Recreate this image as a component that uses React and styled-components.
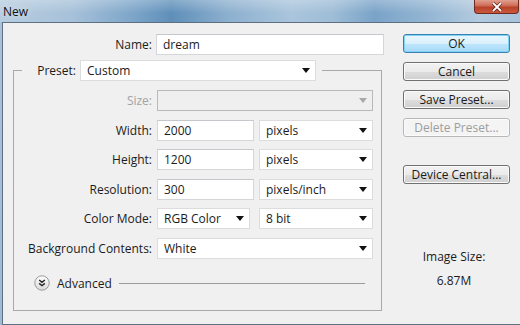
import React from 'react';
import styled, { createGlobalStyle } from 'styled-components';

const GlobalStyle = createGlobalStyle`
  html, body {
    margin: 0;
    padding: 0;
    background: #f0f0f0;
  }
  body {
    font-family: "Open Sans", "Liberation Sans", sans-serif;
    font-size: 12px;
    color: #1b1b1b;
  }
`;

function Arrow({ disabled }) {
  return (
    <svg width="8" height="5" viewBox="0 0 8 5">
      <path d="M0 0 H8 L4 5 Z" fill={disabled ? '#a8a8a8' : '#111'} />
    </svg>
  );
}

function AdvancedIcon() {
  return (
    <svg width="16" height="16" viewBox="0 0 16 16">
      <defs>
        <linearGradient id="adv" x1="0" y1="0" x2="0" y2="1">
          <stop offset="0" stopColor="#ffffff" />
          <stop offset="1" stopColor="#d9d9d9" />
        </linearGradient>
      </defs>
      <circle cx="8" cy="8" r="7.2" fill="url(#adv)" stroke="#9a9a9a" strokeWidth="1" />
      <path d="M5.2 5 L8 7.3 L10.8 5 M5.2 8.4 L8 10.7 L10.8 8.4" fill="none" stroke="#222" strokeWidth="1.4" />
    </svg>
  );
}

export default function App() {
  return (
    <>
      <GlobalStyle />
      <Window>
        <TitleBar>
          <Title>New</Title>
          <CloseButton>
            <svg width="12" height="10" viewBox="0 0 12 10">
              <path d="M2 1 L10 9 M10 1 L2 9" stroke="#5a1a10" strokeWidth="3.2" />
              <path d="M2 1 L10 9 M10 1 L2 9" stroke="#fff" strokeWidth="1.8" />
            </svg>
          </CloseButton>
        </TitleBar>

        <Client>
          <FormColumn>
            <NameRow>
              <Label>Name:</Label>
              <Field $width={228}>dream</Field>
            </NameRow>

            <Group>
              <Legend>
                <LegendLabel>Preset:</LegendLabel>
                <Dropdown $width={236}>
                  <span>Custom</span>
                  <Arrow />
                </Dropdown>
              </Legend>

              <Rows>
                <Label $disabled>Size:</Label>
                <Dropdown $disabled>
                  <span />
                  <Arrow disabled />
                </Dropdown>

                <Label>Width:</Label>
                <Pair>
                  <Field>2000</Field>
                  <Dropdown><span>pixels</span><Arrow /></Dropdown>
                </Pair>

                <Label>Height:</Label>
                <Pair>
                  <Field>1200</Field>
                  <Dropdown><span>pixels</span><Arrow /></Dropdown>
                </Pair>

                <Label>Resolution:</Label>
                <Pair>
                  <Field>300</Field>
                  <Dropdown><span>pixels/inch</span><Arrow /></Dropdown>
                </Pair>

                <Label>Color Mode:</Label>
                <Pair>
                  <Dropdown $width={93}><span>RGB Color</span><Arrow /></Dropdown>
                  <Dropdown><span>8 bit</span><Arrow /></Dropdown>
                </Pair>

                <Label>Background Contents:</Label>
                <Dropdown><span>White</span><Arrow /></Dropdown>
              </Rows>

              <AdvancedRow>
                <AdvancedIcon />
                <span>Advanced</span>
                <Rule />
              </AdvancedRow>
            </Group>
          </FormColumn>

          <ButtonColumn>
            <Button $default>OK</Button>
            <Button>Cancel</Button>
            <Button>Save Preset...</Button>
            <Button $disabled>Delete Preset...</Button>
            <Button $gap>Device Central...</Button>
            <ImageSize>
              <div>Image Size:</div>
              <div>6.87M</div>
            </ImageSize>
          </ButtonColumn>
        </Client>
      </Window>
    </>
  );
}

const Window = styled.div`
  width: 520px;
  height: 325px;
  display: flex;
  flex-direction: column;
  background: linear-gradient(180deg, #a9c3da 0%, #9fbbd4 100%);
  overflow: hidden;
`;

const TitleBar = styled.div`
  height: 22px;
  flex: none;
  display: flex;
  align-items: flex-start;
  background:
    linear-gradient(180deg, rgba(255,255,255,0.25) 0%, rgba(255,255,255,0) 60%),
    linear-gradient(90deg, #b7cde0 0%, #a6c1d9 14%, #7ba4c8 26%, #5f8fb9 33%, #8db0cf 44%,
      #aac5dc 56%, #9ebdd7 64%, #7aa3c8 72%, #93b5d3 82%, #b3cadf 92%, #a7c2da 100%);
`;

const Title = styled.div`
  padding: 3px 0 0 3px;
  font-size: 12px;
  color: #111;
  text-shadow: 0 0 6px rgba(255,255,255,0.7);
`;

const CloseButton = styled.div`
  margin-left: auto;
  margin-right: 1px;
  width: 45px;
  height: 14px;
  box-sizing: border-box;
  display: flex;
  align-items: center;
  justify-content: center;
  border: 1px solid #6e2a1e;
  border-top: 0;
  border-radius: 0 0 4px 4px;
  background: linear-gradient(180deg, #e0a090 0%, #cf6a55 45%, #b8412a 55%, #c9583e 100%);
`;

const Client = styled.div`
  flex: 1;
  margin-left: 2px;
  border-top: 1px solid #5d6f80;
  border-left: 1px solid #5d6f80;
  border-bottom: 1px solid #5d6f80;
  background: #f0f0f0;
  display: flex;
  gap: 19px;
  padding: 11px 0 0 10px;
  box-sizing: border-box;
`;

const FormColumn = styled.div`
  width: 371px;
  display: flex;
  flex-direction: column;
`;

const NameRow = styled.div`
  display: grid;
  grid-template-columns: 139px 228px;
  gap: 4px;
  align-items: center;
`;

const Label = styled.div`
  text-align: right;
  white-space: nowrap;
  color: ${p => (p.$disabled ? '#a3a3a3' : '#1b1b1b')};
`;

const Field = styled.div`
  box-sizing: border-box;
  height: 21px;
  width: ${p => (p.$width ? `${p.$width}px` : '100%')};
  padding: 0 6px;
  display: flex;
  align-items: center;
  background: #fff;
  border: 1px solid #d4d6d9;
  border-top-color: #c4c7cb;
  white-space: nowrap;
`;

const Dropdown = styled.div`
  box-sizing: border-box;
  height: 21px;
  width: ${p => (p.$width ? `${p.$width}px` : '100%')};
  padding: 0 5px 0 6px;
  display: flex;
  align-items: center;
  justify-content: space-between;
  background: ${p => (p.$disabled ? '#efefef' : '#fff')};
  border: 1px solid ${p => (p.$disabled ? '#b9b9b9' : '#dcdcdc')};
  white-space: nowrap;

  svg {
    flex: none;
  }
`;

const Group = styled.fieldset`
  box-sizing: border-box;
  width: 369px;
  margin: 5px 0 0 0;
  padding: 9px 7px 0 8px;
  border: 1px solid #a9a9a9;
  min-inline-size: 0;
`;

const Legend = styled.legend`
  padding: 0 6px;
  display: flex;
  align-items: center;
  gap: 4px;
`;

const LegendLabel = styled.div`
  width: 48px;
  text-align: right;
`;

const Rows = styled.div`
  display: grid;
  grid-template-columns: 130px 216px;
  grid-auto-rows: 21px;
  column-gap: 5px;
  row-gap: 8.5px;
  align-items: center;
`;

const Pair = styled.div`
  display: grid;
  grid-template-columns: 97px 114px;
  gap: 5px;
  align-items: center;
`;

const AdvancedRow = styled.div`
  height: 16px;
  margin: 16.5px 9px 19px 12px;
  display: flex;
  align-items: center;
  gap: 7px;
`;

const Rule = styled.div`
  flex: 1;
  height: 1px;
  margin-left: 0;
  background: #9c9c9c;
`;

const ButtonColumn = styled.div`
  width: 107px;
  display: flex;
  flex-direction: column;
  gap: 9px;
`;

const Button = styled.div`
  box-sizing: border-box;
  height: 19px;
  margin-top: ${p => (p.$gap ? '19px' : '0')};
  display: flex;
  align-items: center;
  justify-content: center;
  border-radius: 3px;
  border: 1px solid ${p => (p.$default ? '#3c7fb1' : p.$disabled ? '#b5b9bc' : '#707070')};
  box-shadow: ${p => (p.$default ? 'inset 0 0 0 1px #7fd3f5' : 'inset 0 0 0 1px #fbfbfb')};
  background: ${p =>
    p.$disabled
      ? '#f4f4f4'
      : p.$default
      ? 'linear-gradient(180deg, #eaf6fd 0%, #d9f0fc 50%, #bee6fd 51%, #a7d9f5 100%)'
      : 'linear-gradient(180deg, #f2f2f2 0%, #ebebeb 50%, #dddddd 51%, #cfcfcf 100%)'};
  color: ${p => (p.$disabled ? '#9d9d9d' : '#1b1b1b')};
  white-space: nowrap;
`;

const ImageSize = styled.div`
  margin-top: 56px;
  padding-right: 5px;
  display: flex;
  flex-direction: column;
  align-items: center;
  gap: 8px;
  line-height: 16px;
`;
